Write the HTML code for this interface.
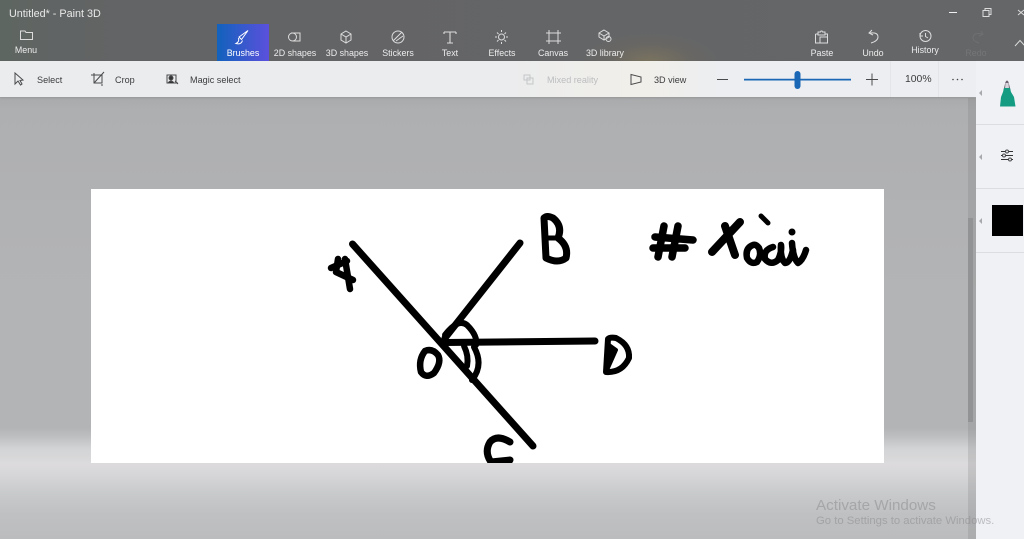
<!DOCTYPE html>
<html><head><meta charset="utf-8"><style>
html,body{margin:0;padding:0;width:1024px;height:539px;overflow:hidden}
body{position:relative;font-family:"Liberation Sans",sans-serif;background:linear-gradient(180deg,#a9aaab 97px,#aeafb1 110px,#b3b4b6 300px,#b3b4b6 428px,#bcbec0 436px,#d2d4d5 449px,#dcdadc 464px,#d6d6d8 475px,#c8c9cb 495px,#bfc0c2 515px,#bbbcbe 539px)}
div{position:absolute}
.t{white-space:nowrap;font-size:8.9px;color:#ececec;top:46.500px;width:70px;text-align:center;line-height:12px}
.b{white-space:nowrap;font-size:9.100px;color:#3c3c3e;top:74px;line-height:12px}
</style></head><body>
<div style="left:0;top:0;width:1024px;height:61px;background:radial-gradient(ellipse 70px 30px at 650px 62px,#7a735f 0%,rgba(110,105,95,.45) 60%,rgba(100,101,103,0) 100%),linear-gradient(90deg,#5e6661 0,#616464 60px,#636466 200px,#656668 1024px)"></div>
<div style="left:0;top:61px;width:976px;height:36px;background:linear-gradient(90deg,#eaecee 0,#ebecee 500px,#f1efe9 640px,#eceef1 720px,#edeef1 976px);box-shadow:0 1px 2px rgba(0,0,0,.12)"></div>
<div style="left:968px;top:98px;width:8px;height:441px;background:rgba(110,110,112,.2)"></div>
<div style="left:968px;top:218px;width:5px;height:204px;background:#929395"></div>
<div style="left:976px;top:61px;width:48px;height:478px;background:#f0f1f5"></div>
<div style="left:217px;top:24px;width:52px;height:37px;background:linear-gradient(90deg,#1262bc,#5b50dc)"></div>
<div style="left:91px;top:189px;width:793px;height:274px;background:#fff"></div>
<div style="left:976px;top:124px;width:48px;height:1px;background:#dcdde0"></div>
<div style="left:976px;top:188px;width:48px;height:1px;background:#dcdde0"></div>
<div style="left:976px;top:252px;width:48px;height:1px;background:#dcdde0"></div>
<div style="left:890px;top:61px;width:1px;height:36px;background:#e4e5e8"></div>
<div style="left:938px;top:61px;width:1px;height:36px;background:#e4e5e8"></div>
<div style="left:992px;top:205px;width:31px;height:31px;background:#000"></div>

<svg width="1024" height="539" viewBox="0 0 1024 539" style="position:absolute;left:0;top:0">
<defs><clipPath id="c"><rect x="91" y="189" width="793" height="274"/></clipPath></defs>
<g clip-path="url(#c)" fill="none" stroke="#000" stroke-width="7" stroke-linecap="round" stroke-linejoin="round">
<path d="M352.500 244L533 446"/><path d="M520 243L445 338"/><path d="M445 342.500L595 341"/>
<path d="M445 335Q458 318 467 325Q478 336 476 345" stroke-width="6"/>
<path d="M464 346Q469 356 467 366" stroke-width="6"/>
<path d="M474 347Q484 365 472 380" stroke-width="6"/>
<path d="M425 351Q418 360 421 372Q426 379 434 373Q442 362 438 355Q432 348 425 351Z" stroke-width="6.500"/>
<path d="M608 339L606 372Q622 373 629 358Q630 345 616 338Q610 337 608 339Z" stroke-width="6"/>
<path d="M609 345L608 368L616 350Z" fill="#000" stroke-width="4"/>
<path d="M544 218L546 258Q558 264 566 258Q569 246 558 238Q563 226 553 218Q547 215 544 218Z" stroke-width="7"/>
<path d="M546 238L557 238" stroke-width="5"/>
<path d="M510 442Q497 434 490 442Q484 452 491 462L510 460" stroke-width="7"/>
<path d="M331 268L347 261" stroke-width="6.500"/><path d="M345 259L350 289" stroke-width="6.500"/><path d="M338 259L336 272L353 280" stroke-width="6.500"/>
<path d="M664 226L658 257M678 226L672 257M655 237L693 240M653 248L685 248" stroke-width="7.500"/>
<path d="M740 222Q725 238 712 252M725 226L735 255" stroke-width="8"/>
<path d="M753 245Q745 248 747 258Q751 265 757 262Q762 255 759 248Q756 244 753 245Z" stroke-width="6.500"/>
<path d="M773 247Q763 250 765 259Q771 266 778 260Q782 252 781 245Q780 258 785 263Q790 263 793 250" stroke-width="6.500"/>
<path d="M792 243Q793 258 798 263Q803 260 806 250" stroke-width="6.500"/>
<path d="M761 216L768 223" stroke-width="5"/>
<circle cx="792" cy="232" r="3.500" fill="#000" stroke="none"/>
</g>

<g fill="none" stroke="#dcdcdc" stroke-width="1">
<path d="M20.500 32.500V39.500H32.500V32.500H26L25 31H20.500Z"/>
<path d="M248 30.500L241.500 39.500L239 37L248 30.500ZM238.500 38Q239.500 42 236 43.500Q241 45 242.500 40.500" stroke="#fff"/>
<path d="M291 33H300V41H297"/><circle cx="292.500" cy="37" r="4"/><path d="M293 41H300"/>
<path d="M346 31L351 34V40L346 43L341 40V34ZM341 34L346 37L351 34M346 37V43"/>
<circle cx="398" cy="37" r="6"/><path d="M393 41L402 32M396 41L403 36"/>
<path d="M444 32H456M450 32V43M447 43H453M444 32V34M456 32V34" stroke-width="1.100"/>
<circle cx="501.500" cy="37" r="3"/><path d="M501.500 30V32M501.500 42V44M495 37H497M506 37H508M497 32.500L498.500 34M506 32.500L504.500 34M497 41.500L498.500 40M506 41.500L504.500 40"/>
<path d="M549 33H558V41H549ZM549 30V44M558 30V44M546 33H561M546 41H561"/>
<path d="M604 30L609 33V37L604 40L599 37V33ZM599 33L604 36L609 33M604 36V40"/><circle cx="608.500" cy="39" r="2.500"/>
<path d="M815.500 34H818M825 34H827.500V37M815.500 34V43H820M818 34V32H820.500L821 31H822L822.500 32H825V35H818ZM820 37H827.500V43H820Z"/>
<path d="M872 30L869 33L873 35M870 33Q878 32 878 37Q878 41 871 43"/>
<circle cx="925.500" cy="36" r="5.500"/><path d="M925.500 33V36.500L928 38M920 33V36H923"/>
<path d="M981 31L983 34L979 36M982 34Q973 32 973 38Q973 41 979 43" stroke="#6f7072"/>
<path d="M949 12.500H957" stroke="#f0f0f0"/>
<path d="M983 10.500H989V16.500H983ZM985 10.500V8.500H991V14.500H989"/>
<path d="M1018 10L1024 15M1024 10L1018 15"/>
<path d="M1015 46L1020 40.500L1025 46"/>
</g>
<g fill="none" stroke="#4a4a4c" stroke-width="1">
<path d="M15 73L15 84L18 81L20.500 85L22 84L20 80.500L23 80Z"/>
<path d="M92 76H101V84H93V74M93 84L103 73M101 85V87M90 76H92" transform="translate(1 -1)"/>
<path d="M167 75H176V83H167ZM171 83H178M175 81L178 84"/><circle cx="171" cy="78" r="2" fill="#333"/><path d="M168 83Q171 79 174 83" fill="#333"/>
<path d="M631 74.500L641 77L641 82L631 84.500Z"/>
<path d="M717 79.500H728M866 79.500H878M872 73.500V85.500"/>
<path d="M524 75H530V80H524ZM527 78H533V84H527Z" stroke="#c5c6c8"/>
<path d="M1001 151.500H1013M1001 155.500H1013M1001 159.500H1013" stroke="#333"/>
<circle cx="1007" cy="151.500" r="1.500" fill="#f0f1f5"/><circle cx="1004" cy="155.500" r="1.500" fill="#f0f1f5"/><circle cx="1010" cy="159.500" r="1.500" fill="#f0f1f5"/>
</g>
<path d="M744 78.800H851V80.500H744Z" fill="#1a67b5"/>
<rect x="794.500" y="71" width="6" height="18" rx="3" fill="#1a67b5"/>
<circle cx="953" cy="79.500" r=".8" fill="#444"/><circle cx="957.500" cy="79.500" r=".8" fill="#444"/><circle cx="962" cy="79.500" r=".8" fill="#444"/>
<path d="M982 90L979 93L982 96ZM982 154L979 157L982 160ZM982 218L979 221L982 224Z" fill="#a8a9ac"/>
<path d="M1003.500 90L1005.500 82Q1007 79 1008.500 82L1010.500 90Z" fill="#6d5f70"/>
<path d="M1005.500 83H1008.500L1009 89H1005Z" fill="#d8d6dc"/>
<path d="M1004 88H1010L1011 92L1014 97L1015.500 106.500H1000L1001 97L1003 92Z" fill="#149c83"/>
</svg>

<div class="t" style="width:auto;left:9px;top:7.500px;font-size:10.800px;color:#e8e8e8">Untitled* - Paint 3D</div>
<div class="t" style="left:-9px;top:44px">Menu</div>
<div class="t" style="left:208px;color:#fff">Brushes</div>
<div class="t" style="left:260px">2D shapes</div>
<div class="t" style="left:312px">3D shapes</div>
<div class="t" style="left:363px">Stickers</div>
<div class="t" style="left:415px">Text</div>
<div class="t" style="left:467px">Effects</div>
<div class="t" style="left:518px">Canvas</div>
<div class="t" style="left:570px">3D library</div>
<div class="t" style="left:787px">Paste</div>
<div class="t" style="left:838px">Undo</div>
<div class="t" style="left:890px;top:44px">History</div>
<div class="t" style="left:941px;color:#757678">Redo</div>
<div class="b" style="left:37px">Select</div>
<div class="b" style="left:115px">Crop</div>
<div class="b" style="left:190px">Magic select</div>
<div class="b" style="left:547px;color:#bcbdbf">Mixed reality</div>
<div class="b" style="left:654px">3D view</div>
<div class="b" style="left:905px;font-size:10.400px">100%</div>
<div style="left:816px;top:496.500px;font-size:15.200px;line-height:17px;color:rgba(135,135,138,.5);white-space:nowrap">Activate Windows</div>
<div style="left:816px;top:515px;font-size:11.300px;line-height:13px;color:rgba(135,135,138,.5);white-space:nowrap">Go to Settings to activate Windows.</div>
</body></html>
